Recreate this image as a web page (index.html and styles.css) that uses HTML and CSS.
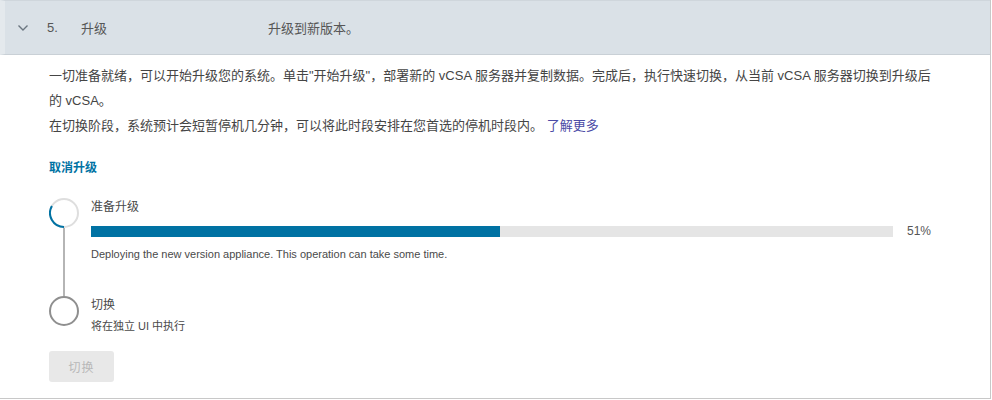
FILE: index.html
```html
<!DOCTYPE html>
<html lang="zh-CN">
<head>
<meta charset="utf-8">
<link rel="stylesheet" href="styles.css">
</head>
<body>
<div class="card">
  <div class="header">
    <svg class="chevron" width="12" height="8" viewBox="0 0 12 8"><polyline points="1.5,1.5 6,6 10.5,1.5" fill="none" stroke="#6b7680" stroke-width="1.4"/></svg>
    <span class="num">5.</span>
    <span class="title">升级</span>
    <span class="subtitle">升级到新版本。</span>
  </div>
  <div class="body">
    <p class="intro">一切准备就绪，可以开始升级您的系统。单击"开始升级"，部署新的 vCSA 服务器并复制数据。完成后，执行快速切换，从当前 vCSA 服务器切换到升级后的 vCSA。<br>在切换阶段，系统预计会短暂停机几分钟，可以将此时段安排在您首选的停机时段内。 <a class="link" href="#">了解更多</a></p>
    <a class="cancel" href="#">取消升级</a>
    <div class="steps">
      <div class="step step-active">
        <div class="rail">
          <svg class="spinner" width="30" height="30" viewBox="0 0 30 30"><circle cx="15" cy="15" r="14" fill="#fff" stroke="#dedede" stroke-width="2"/><path d="M15 29 A14 14 0 0 1 2.9 8" fill="none" stroke="#0072a3" stroke-width="2"/></svg>
          <div class="line"></div>
        </div>
        <div class="content">
          <div class="step-title">准备升级</div>
          <div class="progress-row">
            <div class="bar"><div class="fill" style="width:51%"></div></div>
            <span class="pct">51%</span>
          </div>
          <div class="desc">Deploying the new version appliance. This operation can take some time.</div>
        </div>
      </div>
      <div class="step">
        <div class="rail">
          <div class="dot"></div>
        </div>
        <div class="content">
          <div class="step-title">切换</div>
          <div class="desc">将在独立 UI 中执行</div>
        </div>
      </div>
    </div>
    <button class="btn" disabled>切换</button>
  </div>
</div>
</body>
</html>
```
FILE: styles.css
```css
html, body {
  margin: 0;
  padding: 0;
  background: #fff;
}
body {
  font-family: "Liberation Sans", "Noto Sans CJK SC", sans-serif;
  font-size: 13px;
  color: #454545;
}
.card {
  width: 990px;
  height: 398px;
  border-right: 1px solid #c8c8c8;
  border-bottom: 1px solid #c8c8c8;
  box-sizing: content-box;
}
.header {
  height: 53px;
  background: #dae1e7;
  border-top: 1px solid #cfd6dc;
  border-bottom: 1px solid #c9d0d6;
  border-left: 5px solid #e4e9ed;
  display: flex;
  align-items: center;
  color: #565656;
  font-size: 13px;
}
.chevron {
  margin-left: 12px;
  margin-right: 18px;
}
.num {
  width: 34px;
}
.title {
  width: 187px;
}
.body {
  padding: 8px 59px 0 49px;
}
.intro {
  margin: 0;
  line-height: 25px;
  color: #454545;
}
.link {
  color: #4b4ba6;
  text-decoration: none;
}
.cancel {
  display: block;
  width: fit-content;
  margin-top: 23px;
  font-size: 12px;
  line-height: 14px;
  font-weight: bold;
  color: #0072a3;
  text-decoration: none;
}
.steps {
  margin-top: 23px;
  display: flex;
  flex-direction: column;
}
.step {
  display: flex;
  gap: 12px;
}
.step-active {
  height: 98px;
}
.rail {
  width: 30px;
  display: flex;
  flex-direction: column;
  align-items: center;
}
.spinner {
  display: block;
  flex: none;
}
.line {
  flex: 1;
  width: 2px;
  background: #b5b5b5;
}
.dot {
  width: 26px;
  height: 26px;
  border: 2px solid #8f8f8f;
  border-radius: 50%;
  background: #fff;
}
.content {
  flex: 1;
  padding-top: 1px;
}
.step-title {
  font-size: 12px;
  line-height: 16px;
  color: #4a4a4a;
}
.progress-row {
  display: flex;
  align-items: center;
  margin-top: 9px;
}
.bar {
  flex: 1;
  height: 11px;
  background: #e5e5e5;
}
.fill {
  height: 100%;
  background: #0072a3;
}
.pct {
  margin-left: 14px;
  width: 24px;
  font-size: 12px;
  color: #565656;
}
.desc {
  font-size: 11px;
  line-height: 14px;
  color: #4a4a4a;
}
.step-active .desc {
  margin-top: 9px;
}
.step .content > .step-title + .desc {
  margin-top: 6px;
}
.btn {
  display: block;
  margin-top: 18px;
  width: 65px;
  height: 31px;
  border: none;
  border-radius: 3px;
  background: #e8e8e8;
  color: #b8b8b8;
  font-family: "Liberation Sans", "Noto Sans CJK SC", sans-serif;
  font-size: 12px;
  letter-spacing: 1px;
}
```
